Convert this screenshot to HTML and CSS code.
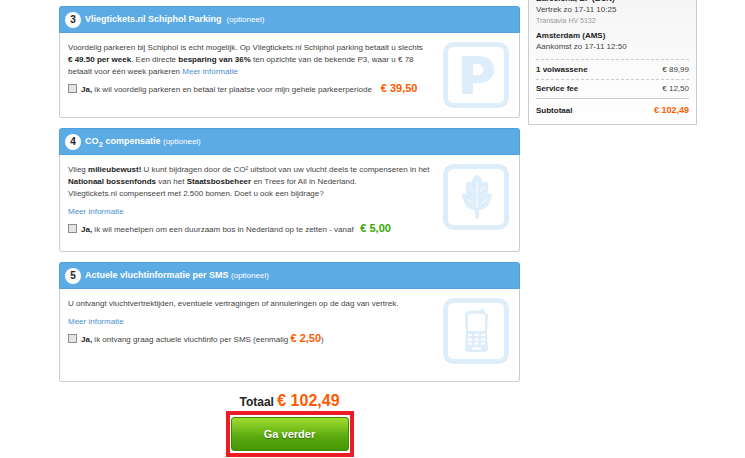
FILE: index.html
```html
<!DOCTYPE html>
<html lang="nl">
<head>
<meta charset="utf-8">
<title>Vliegtickets.nl</title>
<link rel="stylesheet" href="styles.css">
</head>
<body>
<div class="page">
  <main class="main">
    <section class="panel">
      <h2 class="panel-head"><span class="step">3</span><span>Vliegtickets.nl Schiphol Parking &nbsp;<small>(optioneel)</small></span></h2>
      <div class="panel-body">
        <div class="copy">
          <p>Voordelig parkeren bij Schiphol is echt mogelijk. Op Vliegtickets.nl Schiphol parking betaalt u slechts<br><b>€ 49.50 per week</b>. Een directe <b>besparing van 36%</b> ten opzichte van de bekende P3, waar u € 78<br>betaalt voor één week parkeren <a href="#parking">Meer informatie</a></p>
          <label class="option"><input type="checkbox"><span><b>Ja,</b> ik wil voordelig parkeren en betaal ter plaatse voor mijn gehele parkeerperiode &nbsp; &nbsp;<strong class="price">€ 39,50</strong></span></label>
        </div>
        <svg class="icon" viewBox="0 0 66 66" aria-hidden="true">
          <rect class="frame" x="2.5" y="2.5" width="61" height="61" rx="8"/>
          <path class="solid" fill-rule="evenodd" d="M19 14H35C45 14 51 19 51 27.500C51 36 45 41 36 41H30V52H19ZM30 22V33H34C38 33 40 31 40 27.500C40 24 38 22 34 22Z"/>
        </svg>
      </div>
    </section>

    <section class="panel">
      <h2 class="panel-head"><span class="step">4</span><span>CO<sub>2</sub> compensatie <small>(optioneel)</small></span></h2>
      <div class="panel-body roomy">
        <div class="copy">
          <p>Vlieg <b>milieubewust!</b> U kunt bijdragen door de CO² uitstoot van uw vlucht deels te compenseren in het<br><b>Nationaal bossenfonds</b> van het <b>Staatsbosbeheer</b> en Trees for All in Nederland.<br>Vliegtickets.nl compenseert met 2.500 bomen. Doet u ook een bijdrage?</p>
          <p><a href="#co2">Meer informatie</a></p>
          <label class="option"><input type="checkbox"><span><b>Ja,</b> ik wil meehelpen om een duurzaam bos in Nederland op te zetten - vanaf &nbsp; <strong class="price green">€ 5,00</strong></span></label>
        </div>
        <svg class="icon" viewBox="0 0 66 66" aria-hidden="true">
          <rect class="frame" x="2.5" y="2.5" width="61" height="61" rx="8"/>
          <path class="solid" d="M34 10.500C37 12 39 15 39.500 18.500L44 17.500C45.500 21 46 26 44.500 30L49 29.500C49 34 47 38 44.500 42.500C42 45 39 46 36 46V53Q36 55 34 55Q32 55 32 53V46C29 46 26 45 23.500 42.500C21 38 19 34 19 29.500L23.500 30C22 26 22.500 21 24 17.500L28.500 18.500C29 15 31 12 34 10.500Z"/>
          <path class="vein" d="M34 17V44M27 23L31 27M41 23L37 27M24 35L30 40M44 35L38 40"/>
        </svg>
      </div>
    </section>

    <section class="panel">
      <h2 class="panel-head"><span class="step">5</span><span>Actuele vluchtinformatie per SMS <small>(optioneel)</small></span></h2>
      <div class="panel-body spacious">
        <div class="copy">
          <p>U ontvangt vluchtvertrektijden, eventuele vertragingen of annuleringen op de dag van vertrek.</p>
          <p><a href="#sms">Meer informatie</a></p>
          <label class="option"><input type="checkbox"><span><b>Ja,</b> ik ontvang graag actuele vluchtinfo per SMS (eenmalig <strong class="price">€ 2,50</strong>)</span></label>
        </div>
        <svg class="icon" viewBox="0 0 66 66" aria-hidden="true">
          <rect class="frame" x="2.5" y="2.5" width="61" height="61" rx="8"/>
          <path class="solid" fill-rule="evenodd" d="M26 13Q32 12 37 13L38 11Q40 9 41 12L42 15Q45 16 45 19L44 34L45 50Q45 54 41 54H26Q22 54 22 50L23 34L22 18Q22 14 26 13ZM27 16Q25 16 25 18V31Q25 33 27 33H40Q42 33 42 31V18Q42 16 40 16Q33 15 27 16Z"/>
          <path class="keys" d="M25 37H29M31.500 37H35.500M38 37H42M25 41.500H29M31.500 41.500H35.500M38 41.500H42M25 45.500H29M31.500 45.500H35.500M38 45.500H42M29 50.500H38"/>
        </svg>
      </div>
    </section>

    <div class="checkout">
      <p class="total">Totaal <strong>€ 102,49</strong></p>
      <div class="highlight"><button class="go" type="button">Ga verder</button></div>
    </div>
  </main>

  <aside class="summary">
    <p><b>Barcelona, BF (BCN)</b><br>Vertrek zo 17-11 10:25<br><span class="flight">Transavia HV 5132</span></p>
    <p><b>Amsterdam (AMS)</b><br>Aankomst zo 17-11 12:50</p>
    <dl class="costs">
      <div class="row"><dt>1 volwassene</dt><dd>€ 89,99</dd></div>
      <div class="row"><dt>Service fee</dt><dd>€ 12,50</dd></div>
      <div class="row subtotal"><dt>Subtotaal</dt><dd>€ 102,49</dd></div>
    </dl>
  </aside>
</div>
</body>
</html>
```
FILE: styles.css
```css
* { box-sizing: border-box; }
body {
  margin: 0;
  background: #fff;
  color: #444;
  font: 8px/12px "Liberation Sans", Arial, sans-serif;
}
p, h2, dl, dd { margin: 0; }
b { color: #222; }
a { color: #4a90d0; text-decoration: none; }

.page {
  display: flex;
  align-items: flex-start;
  gap: 8px;
  padding: 0 48px 0 59px;
}
.main { flex: 1; min-width: 0; padding-top: 6px; }

.panel {
  margin-bottom: 10px;
  border: 1px solid #ccc;
  border-top: 0;
  border-radius: 3px;
}
.panel-head {
  display: flex;
  align-items: center;
  gap: 4px;
  height: 27px;
  margin: 0 -1px;
  padding: 0 5px;
  border: 1px solid #4fa0de;
  border-radius: 3px 3px 0 0;
  background: #5dabe4;
  color: #fff;
  font-size: 9px;
  line-height: 12px;
}
.panel-head small { font-size: 8px; font-weight: normal; }
.panel-head sub { font-size: 8px; line-height: 0; }
.step {
  display: grid;
  place-items: center;
  width: 16px;
  height: 16px;
  border-radius: 50%;
  background: #fff;
  color: #222;
  font-size: 10px;
}
.panel-body {
  display: flex;
  justify-content: space-between;
  align-items: flex-start;
  padding: 9px 10px 9px 8px;
}
.panel-body.roomy { padding-bottom: 15px; }
.panel-body.spacious { padding-bottom: 17px; }
.copy {
  display: flex;
  flex-direction: column;
  gap: 6px;
}
.option { display: flex; align-items: flex-start; gap: 4px; }
.option input {
  appearance: none;
  width: 9px;
  height: 9px;
  margin: 0;
  border: 1px solid #8c8c8c;
  background: #e4e4e4;
}
.option input:checked { background: #4a90d0; }
.price { color: #ff5a00; font-size: 11px; line-height: 0; }
.price.green { color: #35a800; }

.icon { flex: none; width: 66px; height: 66px; }
.frame { fill: none; stroke: #deedfa; stroke-width: 5; }
.solid { fill: #deedfa; }
.vein { fill: none; stroke: #fff; stroke-width: 1; }
.keys { fill: none; stroke: #fff; stroke-width: 2; }

.checkout {
  display: flex;
  flex-direction: column;
  align-items: center;
}
.total { color: #222; font-size: 12px; font-weight: bold; line-height: 17px; }
.total strong { color: #ff5a00; font-size: 16px; }
.highlight { padding: 2px 1px; border: 4px solid #ed1c24; }
.go {
  display: block;
  width: 118px;
  height: 34px;
  border: 1px solid #3f8a05;
  border-radius: 3px;
  background: linear-gradient(#a0dc30, #58a80c 60%, #479605);
  color: #fff;
  font: bold 11px "Liberation Sans", Arial, sans-serif;
  text-shadow: 0 1px 1px #386b08;
}

.summary {
  width: 169px;
  margin-top: -7px;
  padding: 0 7px 4px 7px;
  border: 1px solid #ccc;
  border-top: 0;
  background: linear-gradient(#f5f5f5, #fff);
  line-height: 11px;
}
.summary p + p { margin-top: 4px; }
.flight { color: #999; font-size: 7px; }
.costs { margin-top: 7px; }
.row {
  display: flex;
  justify-content: space-between;
  padding: 4px 0;
  border-top: 1px dashed #ccc;
}
.row + .row { padding-top: 3px; }
.row dt { color: #222; font-weight: bold; }
.row.subtotal { padding-top: 6px; border-top: 1px solid #ccc; }
.subtotal dd { color: #ff5a00; font-size: 9px; font-weight: bold; }
```
